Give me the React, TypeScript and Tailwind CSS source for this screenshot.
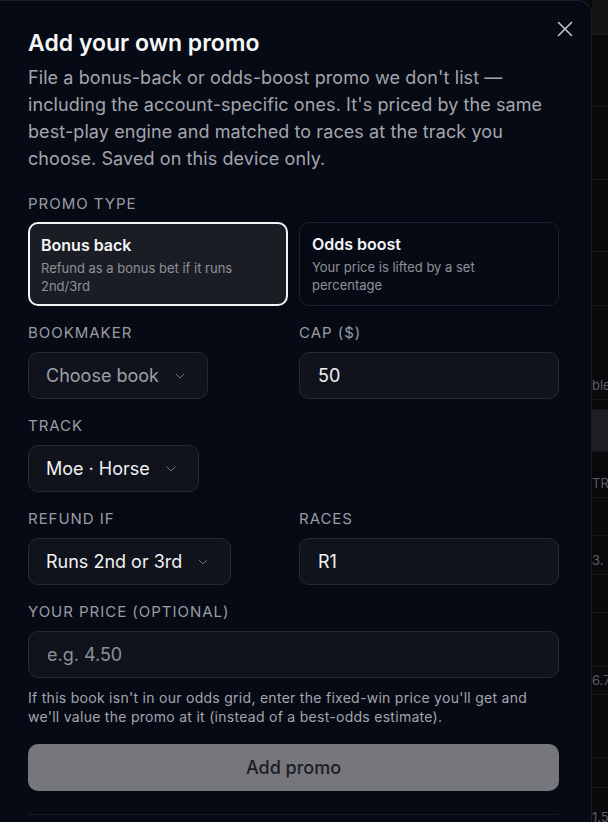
import { ChevronDown, X } from 'lucide-react';

const font = { fontFamily: 'Inter, "Noto Sans", sans-serif' };

function FieldLabel({ children }: { children: React.ReactNode }) {
  return (
    <div className="text-[15px] leading-5 uppercase tracking-[0.065em] text-[#9a9ca4]">
      {children}
    </div>
  );
}

function SelectBox({ value, placeholder }: { value: string; placeholder?: boolean }) {
  return (
    <div className="inline-flex h-[47px] items-center gap-[13px] rounded-[10px] border border-[#262a36] bg-[#10131b] pl-[17px] pr-[19px]">
      <span className={`text-[18px] ${placeholder ? 'text-[#9ea0a8]' : 'text-[#f2f2f4]'}`}>{value}</span>
      <ChevronDown className="h-4 w-4 text-[#6f727b]" strokeWidth={1.5} />
    </div>
  );
}

function TextBox({ value, placeholder }: { value: string; placeholder?: boolean }) {
  return (
    <div className="flex h-[47px] items-center rounded-[10px] border border-[#262a36] bg-[#10131b] px-[18px]">
      <span className={`text-[18px] ${placeholder ? 'text-[#8d9098]' : 'text-[#f2f2f4]'}`}>{value}</span>
    </div>
  );
}

function TypeCard({
  title,
  desc,
  active,
}: {
  title: string;
  desc: string;
  active?: boolean;
}) {
  return (
    <div
      className={`h-[84px] rounded-[10px] px-3 pt-[10px] ${
        active
          ? 'border-2 border-[#f4f4f6] bg-[#1b1d25] pl-[11px] pt-[9px]'
          : 'border border-[#1e2230] bg-[#060a14]'
      }`}
    >
      <div className="text-[16px] font-semibold leading-[22px] text-[#f4f4f6]">{title}</div>
      <div className="mt-[3px] max-w-[228px] text-[13px] leading-[18px] text-[#8f9199]">{desc}</div>
    </div>
  );
}

// slice of the odds table peeking out behind the dialog
function BackdropTable() {
  const rows: { h: number; text?: string; box?: boolean }[] = [
    { h: 35 },
    { h: 72 },
    { h: 73 },
    { h: 72 },
    { h: 54 },
    { h: 94, text: 'ble' },
    { h: 10 },
    { h: 42, box: true },
    { h: 46, text: 'TR' },
    { h: 38 },
    { h: 39, text: '3.' },
    { h: 38 },
    { h: 54 },
    { h: 28, text: '6.7' },
    { h: 63 },
    { h: 30 },
    { h: 44, text: '1.5' },
  ];
  return (
    <div className="flex w-[16px] flex-col overflow-hidden bg-[#09090b]">
      {rows.map((r, i) => (
        <div
          key={i}
          style={{ height: r.h }}
          className={`flex shrink-0 items-end border-b border-[#17171b] text-[13px] leading-5 text-[#5b5d63] ${
            i === 0 ? 'bg-[#131316]' : ''
          } ${r.box ? 'bg-[#1d1e22] text-[#8a8b90]' : ''}`}
        >
          {r.text && <span className="whitespace-nowrap pb-1">{r.text}</span>}
        </div>
      ))}
    </div>
  );
}

export default function App() {
  return (
    <div className="flex h-[822px] w-[608px] overflow-hidden bg-[#09090b]" style={font}>
      <div className="relative h-full w-[592px] shrink-0 rounded-tr-[14px] border-r border-t border-[#1a1e2a] bg-[#060a14] pl-7 pr-[32px] pt-[28px]">
        <button className="absolute right-[13px] top-[15px] text-[#c4c5cc]">
          <X className="h-[26px] w-[26px]" strokeWidth={1.5} />
        </button>

        <h2 className="text-[23px] font-semibold leading-[28px] text-[#f7f7f8]">Add your own promo</h2>
        <p className="mt-[7px] text-[18px] leading-[27px] tracking-[0.005em] text-[#a4a5ac]">
          File a bonus-back or odds-boost promo we don't list — including the account-specific ones. It's priced by
          the same best-play engine and matched to races at the track you choose. Saved on this device only.
        </p>

        <div className="mt-[22px]">
          <FieldLabel>Promo type</FieldLabel>
          <div className="mt-2 grid grid-cols-2 gap-[11px]">
            <TypeCard title="Bonus back" desc="Refund as a bonus bet if it runs 2nd/3rd" active />
            <TypeCard title="Odds boost" desc="Your price is lifted by a set percentage" />
          </div>
        </div>

        <div className="mt-[17px] grid grid-cols-2 gap-[11px]">
          <div>
            <FieldLabel>Bookmaker</FieldLabel>
            <div className="mt-[9px]">
              <SelectBox value="Choose book" placeholder />
            </div>
          </div>
          <div>
            <FieldLabel>Cap ($)</FieldLabel>
            <div className="mt-[9px]">
              <TextBox value="50" />
            </div>
          </div>
        </div>

        <div className="mt-[17px]">
          <FieldLabel>Track</FieldLabel>
          <div className="mt-[9px]">
            <SelectBox value="Moe · Horse" />
          </div>
        </div>

        <div className="mt-[17px] grid grid-cols-2 gap-[11px]">
          <div>
            <FieldLabel>Refund if</FieldLabel>
            <div className="mt-[9px]">
              <SelectBox value="Runs 2nd or 3rd" />
            </div>
          </div>
          <div>
            <FieldLabel>Races</FieldLabel>
            <div className="mt-[9px]">
              <TextBox value="R1" />
            </div>
          </div>
        </div>

        <div className="mt-[17px]">
          <FieldLabel>Your price (optional)</FieldLabel>
          <div className="mt-[9px]">
            <TextBox value="e.g. 4.50" placeholder />
          </div>
          <p className="mt-[10px] text-[14px] leading-[19px] tracking-[0.02em] text-[#a4a5ac]">
            If this book isn't in our odds grid, enter the fixed-win price you'll get and we'll value the promo at it
            (instead of a best-odds estimate).
          </p>
        </div>

        <button className="mt-[18px] flex h-[47px] w-full items-center justify-center rounded-[10px] bg-[#76777c] text-[18px] font-medium text-[#1b1c22]">
          Add promo
        </button>

        <div className="mt-[23px] border-t border-[#161a24]" />
      </div>
      <BackdropTable />
    </div>
  );
}
